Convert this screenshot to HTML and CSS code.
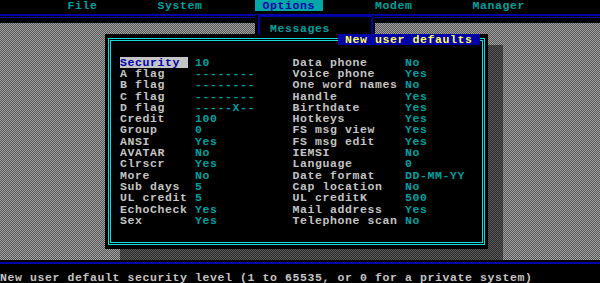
FILE: index.html
```html
<!DOCTYPE html>
<html lang="en">
<head>
  <meta charset="UTF-8">
  <title>Options - New user defaults</title>
  <link rel="stylesheet" href="styles.css">
</head>
<body>
  <div class="screen">
    <!-- top menu -->
    <div class="menubar">
      <span class="menu-item file">File</span>
      <span class="menu-item system">System</span>
      <span class="menu-item options active">Options</span>
      <span class="menu-item modem">Modem</span>
      <span class="menu-item manager">Manager</span>
    </div>
    <div class="rule"></div>

    <div class="desk">
      <div class="dropdown">
        <div class="dropdown-item">Messages</div>
      </div>

      <div class="dialog">
        <div class="dialog-title">New user defaults</div>
        <div class="fields">
          <span class="label"><span class="selected">Security</span></span><span class="value">10</span>
          <span class="label">Data phone</span><span class="value">No</span>

          <span class="label">A flag</span><span class="value">--------</span>
          <span class="label">Voice phone</span><span class="value">Yes</span>

          <span class="label">B flag</span><span class="value">--------</span>
          <span class="label">One word names</span><span class="value">No</span>

          <span class="label">C flag</span><span class="value">--------</span>
          <span class="label">Handle</span><span class="value">Yes</span>

          <span class="label">D flag</span><span class="value">-----X--</span>
          <span class="label">Birthdate</span><span class="value">Yes</span>

          <span class="label">Credit</span><span class="value">100</span>
          <span class="label">Hotkeys</span><span class="value">Yes</span>

          <span class="label">Group</span><span class="value">0</span>
          <span class="label">FS msg view</span><span class="value">Yes</span>

          <span class="label">ANSI</span><span class="value">Yes</span>
          <span class="label">FS msg edit</span><span class="value">Yes</span>

          <span class="label">AVATAR</span><span class="value">No</span>
          <span class="label">IEMSI</span><span class="value">No</span>

          <span class="label">Clrscr</span><span class="value">Yes</span>
          <span class="label">Language</span><span class="value">0</span>

          <span class="label">More</span><span class="value">No</span>
          <span class="label">Date format</span><span class="value">DD-MM-YY</span>

          <span class="label">Sub days</span><span class="value">5</span>
          <span class="label">Cap location</span><span class="value">No</span>

          <span class="label">UL credit</span><span class="value">5</span>
          <span class="label">UL creditK</span><span class="value">500</span>

          <span class="label">EchoCheck</span><span class="value">Yes</span>
          <span class="label">Mail address</span><span class="value">Yes</span>

          <span class="label">Sex</span><span class="value">Yes</span>
          <span class="label">Telephone scan</span><span class="value">No</span>
        </div>
      </div>
    </div>

    <div class="divider"></div>
    <div class="status">New user default security level (1 to 65535, or 0 for a private system)</div>
  </div>
</body>
</html>
```

FILE: styles.css
```css
* {
  margin: 0;
  padding: 0;
  box-sizing: border-box;
}

body {
  background-color: #000;
  width: 600px;
  height: 283px;
  overflow: hidden;
}

/* 80x25 text screen: one column = 7.5px, one row = 11.32px */
.screen {
  --c: 7.5px;
  --r: 11.32px;
  font-family: 'Liberation Mono', 'DejaVu Sans Mono', monospace;
  font-size: 11.5px;
  letter-spacing: 0.6px;
  font-weight: bold;
  line-height: var(--r);
  white-space: nowrap;
  color: #c4c4c4;
  width: 600px;
  height: 283px;
}

.menubar {
  display: flex;
  height: var(--r);
  color: #00a0a0;
}

.menu-item.file { margin-left: calc(9 * var(--c)); }
.menu-item.system { margin-left: calc(8 * var(--c)); }
.menu-item.options { margin-left: calc(7 * var(--c)); padding: 0 var(--c); }
.menu-item.modem { margin-left: calc(7 * var(--c)); }
.menu-item.manager { margin-left: calc(8 * var(--c)); }

.menu-item.active {
  background-color: #00a8a8;
  color: #0000a8;
}

.rule {
  height: var(--r);
  background: linear-gradient(to bottom,
    transparent 3.4px, #0000a8 3.4px 4.8px,
    transparent 4.8px 6px, #0000a8 6px 7.3px,
    transparent 7.3px);
}

.desk {
  position: relative;
  isolation: isolate;
  height: calc(21 * var(--r));
  background: repeating-conic-gradient(#a4a4a4 0 25%, #545454 0 50%) 0 0 / 2px 2px;
}

.dropdown {
  position: absolute;
  left: calc(34 * var(--c));
  top: -7.6px;
  width: calc(16 * var(--c));
  height: 30px;
  background-color: #000;
}

.dropdown::before {
  content: "";
  position: absolute;
  top: 0;
  left: 3px;
  right: 2.5px;
  bottom: 0;
  border: 2px solid #0000a8;
  border-bottom: none;
}

.dropdown-item {
  margin-top: 7.6px;
  padding-left: calc(2 * var(--c));
  color: #00a0a0;
}

.dialog {
  position: absolute;
  left: calc(14 * var(--c));
  top: var(--r);
  width: calc(51 * var(--c));
  height: calc(19 * var(--r));
  background-color: #000;
}

/* drop shadow, 2 columns right and 1 row down */
.dialog::after {
  content: "";
  position: absolute;
  left: calc(2 * var(--c));
  top: var(--r);
  width: 100%;
  height: 100%;
  z-index: -1;
  background: repeating-conic-gradient(#5a5a5a 0 25%, #2a2a2a 0 50%) 0 0 / 2px 2px;
}

/* double frame through the middle of the edge cells */
.dialog::before {
  content: "";
  position: absolute;
  top: 4px;
  left: 3px;
  right: 2.5px;
  bottom: 4px;
  border: 3px double #10dcdc;
}

.dialog-title {
  position: relative;
  width: fit-content;
  margin-left: calc(31 * var(--c));
  padding: 0 var(--c);
  height: var(--r);
  background-color: #0000a8;
  color: #ffff55;
}

.fields {
  display: grid;
  grid-template-columns: calc(10 * var(--c)) calc(13 * var(--c)) calc(15 * var(--c)) 1fr;
  grid-auto-rows: var(--r);
  margin-top: var(--r);
  padding-left: calc(2 * var(--c));
}

.label {
  color: #c4c4c4;
}

.value {
  color: #00a0a0;
}

.selected {
  display: inline-block;
  width: calc(9 * var(--c));
  background-color: #c4c4c4;
  color: #0000a8;
}

.divider {
  height: var(--r);
  background: linear-gradient(to bottom,
    transparent 2.4px, #0000a8 2.4px 3.6px, transparent 3.6px);
}

.status {
  height: var(--r);
  color: #c4c4c4;
}
```
